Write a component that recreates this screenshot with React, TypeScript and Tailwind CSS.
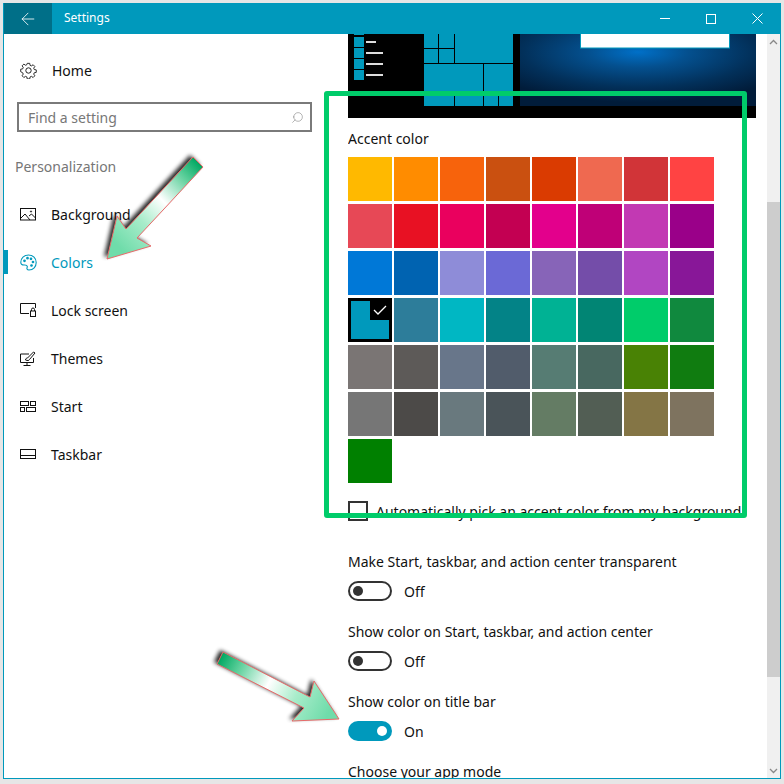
import React from "react";
import { ArrowLeft, Search } from "lucide-react";

const font = { fontFamily: '"Noto Sans", "Open Sans", sans-serif' };

const swatches = [
  ["#FFB900","#FF8C00","#F7630C","#CA5010","#DA3B01","#EF6950","#D13438","#FF4343"],
  ["#E74856","#E81123","#EA005E","#C30052","#E3008C","#BF0077","#C239B3","#9A0089"],
  ["#0078D7","#0063B1","#8E8CD8","#6B69D6","#8764B8","#744DA9","#B146C2","#881798"],
  ["#0099BC","#2D7D9A","#00B7C3","#038387","#00B294","#018574","#00CC6A","#10893E"],
  ["#7A7574","#5D5A58","#68768A","#515C6B","#567C73","#486860","#498205","#107C10"],
  ["#767676","#4C4A48","#69797E","#4A5459","#647C64","#525E54","#847545","#7E735F"],
  ["#008000"],
];

const Gear = () => (
  <svg width="17" height="17" viewBox="0 0 17 17" fill="none" stroke="#222" strokeWidth="1">
    <circle cx="8.5" cy="8.5" r="2.7" />
    <path d="M7.2 1h2.6l.4 2.1 1.4.6 1.8-1.2 1.8 1.8-1.2 1.8.6 1.4 2.1.4v2.6l-2.1.4-.6 1.4 1.2 1.8-1.8 1.8-1.8-1.2-1.4.6-.4 2.1H7.2l-.4-2.1-1.4-.6-1.8 1.2-1.8-1.8 1.2-1.8-.6-1.4L.3 9.8V7.2l2.1-.4.6-1.400-1.200-1.800 1.800-1.800 1.800 1.200 1.400-.6z" transform="translate(0.4 0.4) scale(0.95)" />
  </svg>
);
const BgIcon = () => (
  <svg width="16" height="13" viewBox="0 0 16 13" fill="none" stroke="#111" strokeWidth="1">
    <rect x="0.5" y="0.5" width="15" height="11.5" />
    <path d="M1 10l4-4 5 6M9 8l2.5-2 4 4" />
    <circle cx="11" cy="3.5" r="0.6" />
  </svg>
);
const PaletteIcon = () => (
  <svg width="17" height="17" viewBox="0 0 17 17" fill="none" stroke="#0099bc" strokeWidth="1.1">
    <path d="M8.5 1C4 1 .8 4.2.8 8.2c0 2.200 1.600 2.800 3.200 2.800 1.800 0 3-.3 3.300 1.400.2 1.300-.8 1.700-.3 2.600.4.700 1.200 1 2 1 4.300 0 7.200-3.400 7.200-7.500S13 1 8.500 1z" />
    <circle cx="4.500" cy="6.800" r="0.8" fill="#0099bc" />
    <circle cx="7.500" cy="4.200" r="0.8" fill="#0099bc" />
    <circle cx="11" cy="4.800" r="0.8" fill="#0099bc" />
    <circle cx="13" cy="8" r="0.8" fill="#0099bc" />
    <circle cx="11.500" cy="11.500" r="0.8" fill="#0099bc" />
  </svg>
);
const LockIcon = () => (
  <svg width="16" height="14" viewBox="0 0 16 14" fill="none" stroke="#111" strokeWidth="1">
    <path d="M9 10.500H.5v-10h15V5" />
    <rect x="10.500" y="8" width="5" height="5.500" />
    <path d="M11.500 8V6.500a1.500 1.500 0 0 1 3 0V8" />
  </svg>
);
const ThemeIcon = () => (
  <svg width="16" height="15" viewBox="0 0 16 15" fill="none" stroke="#111" strokeWidth="1">
    <path d="M9 3H.5v8.500h13V7" />
    <path d="M7 11.500v2.800M3.500 14.500h7" />
    <path d="M5.500 9c.2-1.500 1-2 2-2l6-6 1.500 1-5.500 6.500c-.4 1.200-2 1.300-4 .5z" />
  </svg>
);
const StartIcon = () => (
  <svg width="16" height="11" viewBox="0 0 16 11" fill="none" stroke="#111" strokeWidth="1">
    <rect x="0.500" y="0.500" width="8" height="4" />
    <rect x="10.500" y="0.500" width="5" height="4" />
    <rect x="0.500" y="6.500" width="4" height="4" />
    <rect x="6.500" y="6.500" width="9" height="4" />
  </svg>
);
const TaskbarIcon = () => (
  <svg width="16" height="10" viewBox="0 0 16 10" fill="none" stroke="#111" strokeWidth="1">
    <rect x="0.500" y="0.500" width="15" height="9" />
    <path d="M0 6.500h16" />
  </svg>
);

const nav: [string, React.ReactNode, boolean?][] = [
  ["Background", <BgIcon />],
  ["Colors", <PaletteIcon />, true],
  ["Lock screen", <LockIcon />],
  ["Themes", <ThemeIcon />],
  ["Start", <StartIcon />],
  ["Taskbar", <TaskbarIcon />],
];

const Preview = () => (
  <svg width="408" height="84" viewBox="0 0 408 84" className="block">
    <defs>
      <radialGradient id="wall" cx="0.5" cy="0.25" r="0.7">
        <stop offset="0" stopColor="#0070c8" />
        <stop offset="0.3" stopColor="#04508f" />
        <stop offset="0.7" stopColor="#02305a" />
        <stop offset="1" stopColor="#011c3a" />
      </radialGradient>
    </defs>
    <rect width="408" height="84" fill="#000" />
    <rect x="172" width="236" height="72" fill="url(#wall)" />
    <rect x="232.500" y="-1" width="149" height="15" fill="#fff" stroke="#0099bc" />
    <rect x="76" width="89" height="72" fill="#0099bc" />
    <path d="M90.500 0v29M106.500 0v29M76 14.500h30M76 29.500h89M135.500 29v43M106.500 61v11M150.500 61v11M76 61.500h89" stroke="#000" />
    {[3, 14, 25, 36].map((y) => (
      <rect key={y} x="6" y={y} width="10" height="10" fill="#0099bc" />
    ))}
    <rect x="18" y="7" width="10" height="2" fill="#ddd" />
    <rect x="18" y="18" width="17" height="2" fill="#ddd" />
    <rect x="18" y="29" width="17" height="2" fill="#ddd" />
    <rect x="18" y="40" width="17" height="2" fill="#ddd" />
    <rect x="6" y="0" width="10" height="1" fill="#0099bc" />
  </svg>
);

const Toggle = ({ label, on }: { label: string; on?: boolean }) => (
  <div className="h-[70px]">
    <div className="h-[28px] text-[14px] text-[#111] flex items-center">{label}</div>
    <div className="flex items-center gap-3 h-[20px] mt-[6px]">
      {on ? (
        <div className="w-[44px] h-[20px] rounded-full bg-[#0099bc] flex items-center justify-end pr-[5px]">
          <div className="w-[10px] h-[10px] rounded-full bg-white" />
        </div>
      ) : (
        <div className="w-[44px] h-[20px] rounded-full border-2 border-[#333] flex items-center pl-[3px]">
          <div className="w-[10px] h-[10px] rounded-full bg-[#333]" />
        </div>
      )}
      <span className="text-[14px] text-[#111]">{on ? "On" : "Off"}</span>
    </div>
  </div>
);

const ArrowShape = ({ id, pts, g }: { id: string; pts: string; g: [number, number, number, number] }) => (
  <g>
    <defs>
      <linearGradient id={id} gradientUnits="userSpaceOnUse" x1={g[0]} y1={g[1]} x2={g[2]} y2={g[3]}>
        <stop offset="0" stopColor="#00a862" />
        <stop offset="0.18" stopColor="#5fd09c" />
        <stop offset="0.45" stopColor="#ffffff" />
        <stop offset="0.7" stopColor="#a8ecca" />
        <stop offset="1" stopColor="#6fdcaa" />
      </linearGradient>
      <filter id={id + "b"} x="-30%" y="-30%" width="160%" height="160%">
        <feGaussianBlur stdDeviation="2.2" />
      </filter>
    </defs>
    <polygon points={pts} fill="#000" opacity="0.85" transform="translate(-3 -2)" filter={`url(#${id}b)`} />
    <polygon points={pts} fill={`url(#${id})`} stroke="#e86a6a" strokeWidth="1" />
  </g>
);

export default function App() {
  return (
    <div style={font} className="relative w-[784px] h-[784px] bg-[#e6e6e6] overflow-hidden pt-[3px] pl-[3px] pr-[3px] pb-[5px]">
      <div className="w-full h-full border border-[#0099bc] border-t-0 bg-white flex flex-col">
        <div className="h-[31px] shrink-0 bg-[#0099bc] flex items-center text-white -mx-px">
          <div className="w-[48px] h-full bg-[#006f88] ml-px flex items-center justify-center">
            <ArrowLeft size={20} strokeWidth={1} />
          </div>
          <span className="ml-[12px] text-[12px] pb-[1px]">Settings</span>
          <div className="ml-auto flex items-center h-full mr-[1px]">
            <div className="w-[46px] flex justify-center"><div className="w-[10px] h-px bg-white" /></div>
            <div className="w-[46px] flex justify-center"><div className="w-[10px] h-[10px] border border-white" /></div>
            <div className="w-[46px] flex justify-center">
              <svg width="11" height="11" viewBox="0 0 11 11" stroke="#fff" strokeWidth="1"><path d="M.5.500l10 10M10.500.500l-10 10" /></svg>
            </div>
          </div>
        </div>
        <div className="flex-1 flex min-h-0">
          <div className="w-[344px] shrink-0 relative">
            <div className="h-[68px] pt-[4px] flex items-center pl-[16px] gap-[15px] text-[14px] text-[#111]">
              <Gear />
              <span>Home</span>
            </div>
            <div className="ml-[13px] mr-[36px] h-[30px] border-2 border-[#7a7a7a] flex items-center justify-between pl-[9px] pr-[6px] text-[14px] text-[#777]">
              <span>Find a setting</span>
              <Search size={13} strokeWidth={1} className="-scale-x-100" />
            </div>
            <div className="ml-[11px] mt-[23px] h-[24px] leading-[24px] text-[14px] text-[#767676]">Personalization</div>
            <div className="mt-[11px]">
              {nav.map(([label, icon, active]) => (
                <div key={label} className={`h-[48px] flex items-center text-[14px] ${active ? "text-[#0099bc]" : "text-[#111]"}`}>
                  <div className={`w-[4px] h-[24px] shrink-0 ${active ? "bg-[#0099bc]" : ""}`} />
                  <div className="w-[43px] pl-[12px] shrink-0 flex items-center">{icon}</div>
                  <span>{label}</span>
                </div>
              ))}
            </div>
          </div>
          <div className="flex-1 min-w-0 overflow-hidden">
            <div className="w-[408px]">
              <Preview />
              <div className="mt-[9px] h-[24px] leading-[24px] text-[14px] text-[#111]">Accent color</div>
              <div className="mt-[6px] flex flex-col gap-[3px]">
                {swatches.map((row, i) => (
                  <div key={i} className="flex gap-[2px]">
                    {row.map((c) =>
                      c === "#0099BC" ? (
                        <div key={c} className="relative w-[44px] h-[44px] border-[3px] border-black" style={{ backgroundColor: c }}>
                          <div className="absolute top-[-3px] right-[-3px] w-[22px] h-[22px] bg-black flex items-center justify-center">
                            <svg width="14" height="10" viewBox="0 0 14 10" fill="none" stroke="#fff" strokeWidth="1.3" className="-ml-[2px] mt-[2px]"><path d="M1 5l4 4 8-8" /></svg>
                          </div>
                        </div>
                      ) : (
                        <div key={c} className="w-[44px] h-[44px]" style={{ backgroundColor: c }} />
                      ),
                    )}
                  </div>
                ))}
              </div>
              <div className="mt-[18px] flex items-center gap-2 h-[20px] w-[396px] overflow-hidden">
                <div className="w-[20px] h-[20px] shrink-0 border-2 border-[#333]" />
                <span className="whitespace-nowrap text-[14px] text-[#111]">Automatically pick an accent color from my background</span>
              </div>
              <div className="mt-[26px]">
                <Toggle label="Make Start, taskbar, and action center transparent" />
                <Toggle label="Show color on Start, taskbar, and action center" />
                <Toggle label="Show color on title bar" on />
                <div className="h-[30px] leading-[30px] text-[14px] text-[#111]">Choose your app mode</div>
              </div>
            </div>
          </div>
          <div className="w-[13px] shrink-0 bg-[#f0f0f0] flex flex-col">
            <div className="h-[15px] flex items-center justify-center">
              <svg width="9" height="6" viewBox="0 0 9 6" fill="none" stroke="#888" strokeWidth="1.300"><path d="M1 5l3.500-3.500L8 5" /></svg>
            </div>
            <div className="mt-[153px] h-[475px] bg-[#cdcdcd]" />
            <div className="mt-auto h-[15px] flex items-center justify-center">
              <svg width="9" height="6" viewBox="0 0 9 6" fill="none" stroke="#888" strokeWidth="1.300"><path d="M1 1l3.500 3.500L8 1" /></svg>
            </div>
          </div>
        </div>
      </div>

      {/* annotations lying over the screenshot */}
      <div className="absolute left-[324px] top-[91px] w-[423px] h-[427px] border-[5px] border-[#00cc6a] rounded-[3px]" />
      <svg className="absolute inset-0 pointer-events-none" width="784" height="784" viewBox="0 0 784 784">
        <ArrowShape id="a1" pts="193,157 203,167 137,238 151,246 107,259 117,216 126,229" g={[198, 162, 116, 244]} />
        <ArrowShape id="a2" pts="223,652 217,664 304,708 292,721 339,719 314,681 310,697" g={[220, 658, 328, 714]} />
      </svg>
    </div>
  );
}
